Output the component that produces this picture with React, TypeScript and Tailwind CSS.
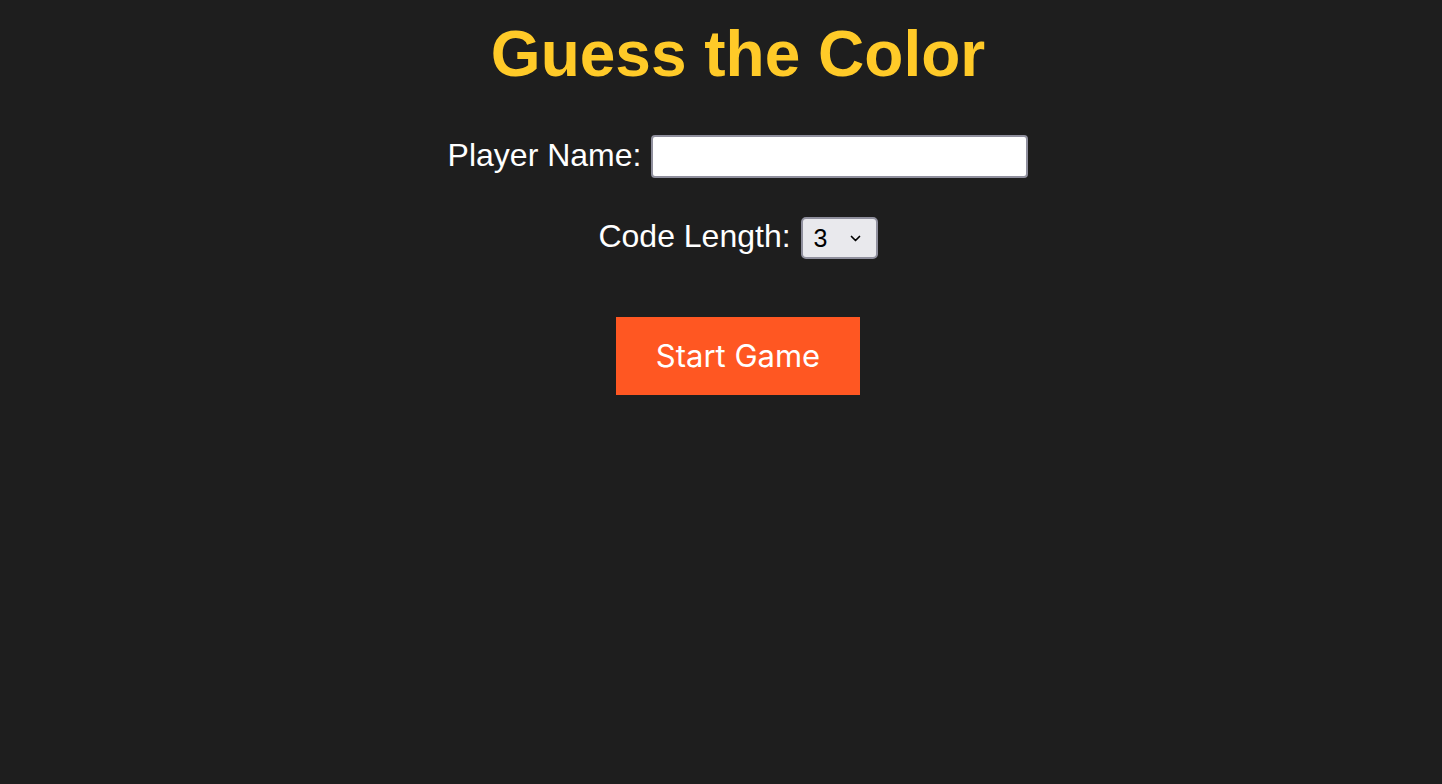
import { useState } from "react";

export default function App() {
  const [name, setName] = useState("");
  const [codeLength, setCodeLength] = useState("3");

  return (
    <div className="min-h-screen bg-[#1e1e1e] pl-[34px] font-['Liberation_Sans',Arial,sans-serif] text-white">
      <div className="flex flex-col items-center pt-[18px]">
        <h1 className="text-[64px] leading-[72px] font-bold text-[#ffca28]">
          Guess the Color
        </h1>

        <div className="mt-[45px] flex h-[43px] items-center gap-[10px]">
          <label htmlFor="player" className="pb-1 text-[32px] leading-[36px]">
            Player Name:
          </label>
          <input
            id="player"
            type="text"
            value={name}
            onChange={(e) => setName(e.target.value)}
            className="h-[43px] w-[377px] rounded-[4px] border-2 border-[#8f8f9d] bg-white px-2 text-[24px] text-black outline-none"
          />
        </div>

        <div className="mt-[39px] flex h-[42px] items-center gap-[10px]">
          <label htmlFor="length" className="pb-1 text-[32px] leading-[36px]">
            Code Length:
          </label>
          <div className="relative h-[42px]">
            <select
              id="length"
              value={codeLength}
              onChange={(e) => setCodeLength(e.target.value)}
              className="h-[42px] w-[77px] appearance-none rounded-[5px] border-2 border-[#8f8f9d] bg-[#e9e9ed] pl-[11px] text-[25px] leading-[38px] text-black outline-none"
            >
              <option value="3">3</option>
              <option value="4">4</option>
              <option value="5">5</option>
              <option value="6">6</option>
            </select>
            {/* chevron */}
            <svg
              className="pointer-events-none absolute top-[18px] left-[49px]"
              width="11"
              height="7"
              viewBox="0 0 11 7"
              fill="none"
            >
              <path
                d="M1.5 1.5l4 4 4-4"
                stroke="#000"
                strokeWidth="1.7"
                strokeLinecap="round"
                strokeLinejoin="round"
              />
            </svg>
          </div>
        </div>

        <button className="mt-[58px] h-[78px] w-[244px] bg-[#ff5722] font-['Inter',sans-serif] text-[31px] leading-[36px] text-white">
          Start Game
        </button>
      </div>
    </div>
  );
}
